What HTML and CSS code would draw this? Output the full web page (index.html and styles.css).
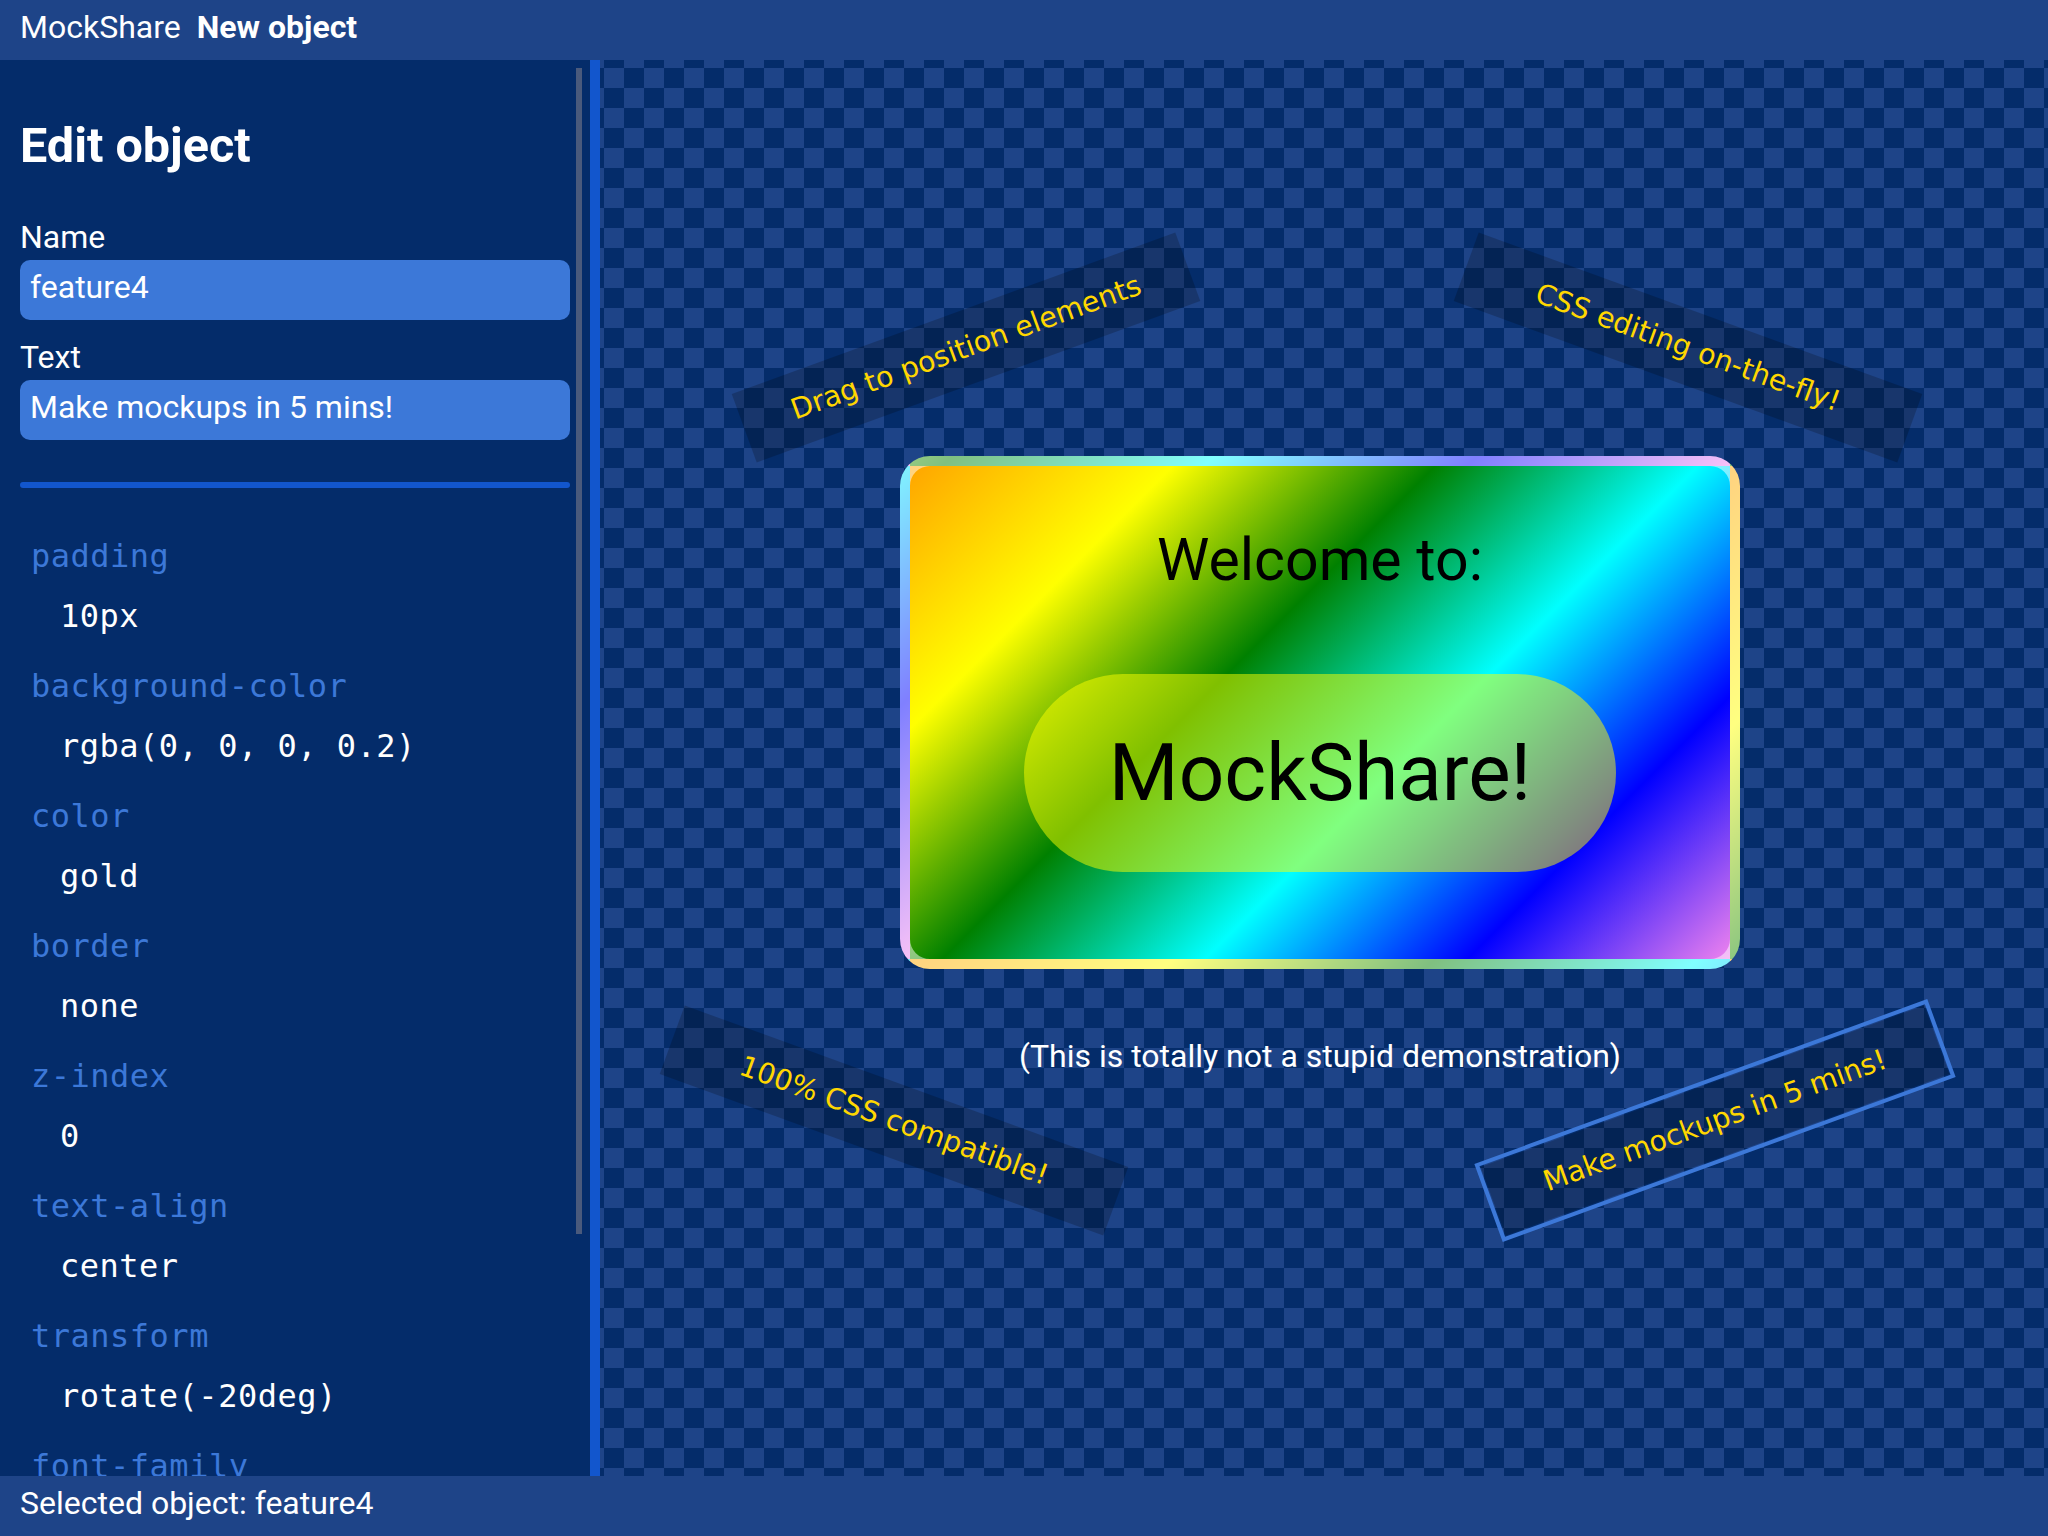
FILE: index.html
```html
<!DOCTYPE html>
<html lang="en">
<head>
<meta charset="utf-8">
<title>MockShare – New object</title>
<link rel="stylesheet" href="styles.css">
</head>
<body>
<div class="app">
  <header class="topbar">
    <span class="brand">MockShare</span>
    <span class="doc-title">New object</span>
  </header>
  <main class="workspace">
    <aside class="sidebar">
      <div class="sidebar-content">
        <h1 class="panel-title">Edit object</h1>
        <label class="field">
          <span class="field-label">Name</span>
          <input class="field-input" type="text" value="feature4">
        </label>
        <label class="field">
          <span class="field-label">Text</span>
          <input class="field-input" type="text" value="Make mockups in 5 mins!">
        </label>
        <div class="divider"></div>
        <dl class="props">
          <div class="prop"><dt>padding</dt><dd>10px</dd></div>
          <div class="prop"><dt>background-color</dt><dd>rgba(0, 0, 0, 0.2)</dd></div>
          <div class="prop"><dt>color</dt><dd>gold</dd></div>
          <div class="prop"><dt>border</dt><dd>none</dd></div>
          <div class="prop"><dt>z-index</dt><dd>0</dd></div>
          <div class="prop"><dt>text-align</dt><dd>center</dd></div>
          <div class="prop"><dt>transform</dt><dd>rotate(-20deg)</dd></div>
          <div class="prop"><dt>font-family</dt><dd>sans-serif</dd></div>
        </dl>
      </div>
      <div class="scroll-thumb"></div>
    </aside>
    <section class="canvas">
      <div class="obj feature feature1">Drag to position elements</div>
      <div class="obj feature feature2">CSS editing on-the-fly!</div>
      <div class="obj welcome-card">
        <div class="welcome-text">Welcome to:</div>
        <div class="welcome-pill">MockShare!</div>
      </div>
      <div class="obj caption">(This is totally not a stupid demonstration)</div>
      <div class="obj feature feature3">100% CSS compatible!</div>
      <div class="obj feature feature4 selected">Make mockups in 5 mins!</div>
    </section>
  </main>
  <footer class="statusbar">Selected object: feature4</footer>
</div>
</body>
</html>
```

FILE: styles.css
```css
html, body {
  margin: 0;
  height: 100%;
}

body {
  font-family: Roboto, "Liberation Sans", sans-serif;
  font-size: 32px;
  color: #ffffff;
  background: #042c6a;
  overflow: hidden;
}

.app {
  display: grid;
  grid-template-rows: 60px 1fr 60px;
  height: 100vh;
}

/* top bar */
.topbar {
  background: #1e4488;
  display: flex;
  align-items: flex-start;
  gap: 16px;
  padding: 0 20px;
  line-height: 55px;
}

.doc-title {
  font-weight: 700;
}

/* main area */
.workspace {
  display: grid;
  grid-template-columns: 600px 1fr;
  min-height: 0;
}

.sidebar {
  position: relative;
  overflow: hidden;
  background: #042c6a;
  border-right: 10px solid #1256cd;
}

.sidebar-content {
  padding: 0 20px;
}

.panel-title {
  margin: 58px 0 0;
  font-size: 48.5px;
  font-weight: 700;
  line-height: 56px;
}

.field {
  display: block;
  margin-top: 17px;
}

.panel-title + .field {
  margin-top: 43px;
}

.field-label {
  display: block;
  line-height: 40px;
  margin-bottom: 3px;
}

.field-input {
  display: block;
  width: 100%;
  box-sizing: border-box;
  height: 60px;
  margin: 0;
  border: 0;
  border-radius: 10px;
  background: #3c78d8;
  color: #ffffff;
  font: inherit;
  padding: 0 10px 6px;
  outline: none;
}

.divider {
  margin-top: 42px;
  height: 6px;
  border-radius: 3px;
  background: #1256cd;
}

.props {
  margin: 48px 0 0;
  font-family: "DejaVu Sans Mono", "Liberation Mono", monospace;
  font-size: 32px;
  letter-spacing: 0.5px;
}

.prop {
  margin-bottom: 30px;
}

.prop dt {
  line-height: 40px;
  padding-left: 11px;
  color: #3c78d8;
}

.prop dd {
  margin: 20px 0 0;
  line-height: 40px;
  padding-left: 40px;
  color: #ffffff;
}

.scroll-thumb {
  position: absolute;
  top: 8px;
  right: 8px;
  width: 6px;
  height: 1166px;
  background: #4a5a7c;
}

/* canvas */
.canvas {
  position: relative;
  overflow: hidden;
  background-color: #042c6a;
  background-image: conic-gradient(#042c6a 0 25%, #1e4488 0 50%, #042c6a 0 75%, #1e4488 0);
  background-size: 40px 40px;
  background-position: 4px 8px;
}

.obj {
  position: absolute;
}

.feature {
  width: 472px;
  box-sizing: border-box;
  padding: 20px;
  background: rgba(0, 0, 0, 0.2);
  color: #ffd700;
  font-family: "DejaVu Sans", sans-serif;
  font-size: 28.5px;
  text-align: center;
  white-space: nowrap;
}

.feature1 {
  left: 130px;
  top: 251px;
  transform: rotate(-20deg);
}

.feature2 {
  left: 852px;
  top: 251px;
  transform: rotate(20deg);
}

.feature3 {
  left: 58px;
  top: 1024px;
  transform: rotate(20deg);
}

.feature4 {
  left: 879px;
  top: 1024px;
  transform: rotate(-20deg);
}

.selected {
  outline: 4px solid #3c78d8;
  outline-offset: 1px;
}

.welcome-card {
  left: 300px;
  top: 396px;
  width: 840px;
  height: 513px;
  box-sizing: border-box;
  border: 10px solid rgba(255, 255, 255, 0.5);
  border-radius: 30px;
  background: linear-gradient(135deg, orange, yellow, green, cyan, blue, violet);
  display: flex;
  flex-direction: column;
  align-items: center;
  padding-top: 60px;
  color: #000000;
}

.welcome-text {
  font-size: 59px;
  line-height: 68px;
}

.welcome-pill {
  margin-top: 80px;
  padding: 52px 85px;
  border-radius: 999px;
  background: rgba(255, 255, 0, 0.5);
  font-size: 80px;
  line-height: 94px;
}

.caption {
  left: 300px;
  top: 977px;
  width: 840px;
  text-align: center;
  color: #ffffff;
}

/* status bar */
.statusbar {
  background: #1e4488;
  padding: 0 20px;
  line-height: 55px;
}
```
